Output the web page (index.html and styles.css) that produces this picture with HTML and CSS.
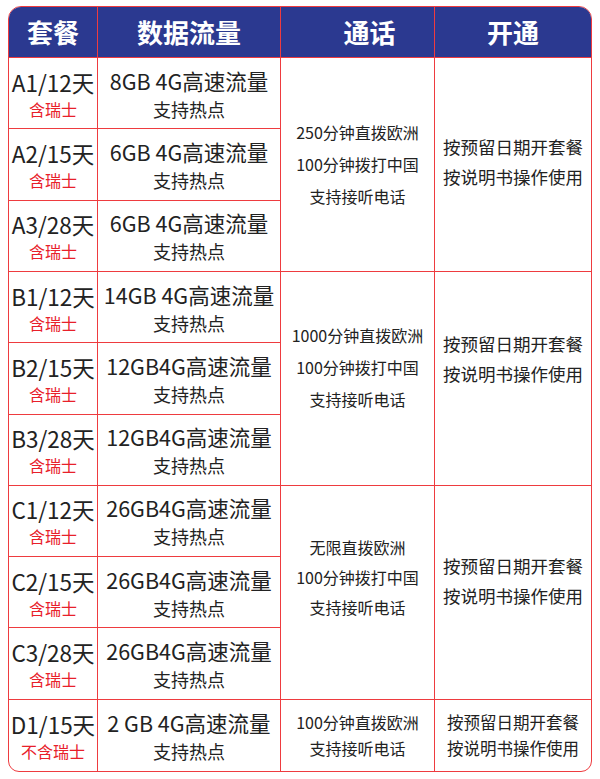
FILE: index.html
```html
<!DOCTYPE html>
<html lang="zh">
<head>
<meta charset="utf-8">
<link rel="stylesheet" href="styles.css">
</head>
<body>
<div class="plan-table">
  <div class="hd">套餐</div>
  <div class="hd">数据流量</div>
  <div class="hd hd-call">通话</div>
  <div class="hd hd-last">开通</div>

  <div class="cell plan"><span class="name">A1/12天</span><span class="note">含瑞士</span></div>
  <div class="cell data"><span class="gb">8GB 4G高速流量</span><span class="hot">支持热点</span></div>
  <div class="cell call span3 call-a"><span>250分钟直拨欧洲</span><span>100分钟拨打中国</span><span>支持接听电话</span></div>
  <div class="cell open span3 last-col open-a"><span>按预留日期开套餐</span><span>按说明书操作使用</span></div>
  <div class="cell plan"><span class="name">A2/15天</span><span class="note">含瑞士</span></div>
  <div class="cell data"><span class="gb">6GB 4G高速流量</span><span class="hot">支持热点</span></div>
  <div class="cell plan"><span class="name">A3/28天</span><span class="note">含瑞士</span></div>
  <div class="cell data"><span class="gb">6GB 4G高速流量</span><span class="hot">支持热点</span></div>

  <div class="cell plan"><span class="name">B1/12天</span><span class="note">含瑞士</span></div>
  <div class="cell data"><span class="gb">14GB 4G高速流量</span><span class="hot">支持热点</span></div>
  <div class="cell call span3 call-b"><span>1000分钟直拨欧洲</span><span>100分钟拨打中国</span><span>支持接听电话</span></div>
  <div class="cell open span3 last-col open-b"><span>按预留日期开套餐</span><span>按说明书操作使用</span></div>
  <div class="cell plan"><span class="name">B2/15天</span><span class="note">含瑞士</span></div>
  <div class="cell data"><span class="gb">12GB4G高速流量</span><span class="hot">支持热点</span></div>
  <div class="cell plan"><span class="name">B3/28天</span><span class="note">含瑞士</span></div>
  <div class="cell data"><span class="gb">12GB4G高速流量</span><span class="hot">支持热点</span></div>

  <div class="cell plan"><span class="name">C1/12天</span><span class="note">含瑞士</span></div>
  <div class="cell data"><span class="gb">26GB4G高速流量</span><span class="hot">支持热点</span></div>
  <div class="cell call span3 call-c"><span>无限直拨欧洲</span><span>100分钟拨打中国</span><span>支持接听电话</span></div>
  <div class="cell open span3 last-col open-c"><span>按预留日期开套餐</span><span>按说明书操作使用</span></div>
  <div class="cell plan"><span class="name">C2/15天</span><span class="note">含瑞士</span></div>
  <div class="cell data"><span class="gb">26GB4G高速流量</span><span class="hot">支持热点</span></div>
  <div class="cell plan"><span class="name">C3/28天</span><span class="note">含瑞士</span></div>
  <div class="cell data"><span class="gb">26GB4G高速流量</span><span class="hot">支持热点</span></div>

  <div class="cell plan last-row"><span class="name">D1/15天</span><span class="note">不含瑞士</span></div>
  <div class="cell data last-row"><span class="gb">2 GB 4G高速流量</span><span class="hot">支持热点</span></div>
  <div class="cell call-d last-row"><span>100分钟直拨欧洲</span><span>支持接听电话</span></div>
  <div class="cell open-d last-row last-col"><span>按预留日期开套餐</span><span>按说明书操作使用</span></div>
</div>
</body>
</html>
```

FILE: styles.css
```css
html, body {
  margin: 0;
  padding: 0;
  background: #ffffff;
}

body {
  font-family: "Noto Sans CJK SC", "Noto Sans", sans-serif;
  color: #222222;
}

.plan-table {
  margin: 6px 0 0 8px;
  width: 584px;
  height: 766px;
  box-sizing: border-box;
  border: 1px solid #ee3b3f;
  border-radius: 13px 13px 11px 11px;
  overflow: hidden;
  display: grid;
  grid-template-columns: 89px 183px 154px 1fr;
  grid-template-rows: 51px repeat(10, 1fr);
}

.hd {
  background: #2b3990;
  color: #ffffff;
  font-weight: 700;
  font-size: 26px;
  display: flex;
  align-items: center;
  justify-content: center;
  border-right: 1px solid #ee3b3f;
  border-bottom: 1px solid #ee3b3f;
  line-height: 1;
}

.hd-call {
  padding-left: 24px;
}

.hd-last {
  border-right: none;
}

.cell {
  display: flex;
  flex-direction: column;
  align-items: center;
  justify-content: center;
  text-align: center;
  border-right: 1px solid #ee3b3f;
  border-bottom: 1px solid #ee3b3f;
  white-space: nowrap;
  box-sizing: border-box;
}

.last-col {
  border-right: none;
}

.last-row {
  border-bottom: none;
}

.span3 {
  grid-row: span 3;
}

.plan .name {
  font-size: 22.5px;
  line-height: 32px;
}

.plan .note {
  font-size: 16px;
  line-height: 23px;
  color: #e8202a;
}

.data .gb {
  font-size: 21.5px;
  line-height: 31px;
}

.data .hot {
  font-size: 18px;
  line-height: 26px;
}

.call {
  font-size: 16px;
  line-height: 32px;
}

.call-a {
  padding-bottom: 0;
}

.call-b {
  padding-bottom: 22px;
}

.call-c {
  padding-bottom: 30px;
  line-height: 30px;
}

.open {
  font-size: 17.5px;
  line-height: 30px;
}

.open-a {
  padding-bottom: 4px;
}

.open-b {
  padding-bottom: 38px;
}

.open-c {
  padding-bottom: 22px;
}

.call-d {
  font-size: 16px;
  line-height: 26px;
}

.open-d {
  font-size: 16.5px;
  line-height: 26px;
}
```
